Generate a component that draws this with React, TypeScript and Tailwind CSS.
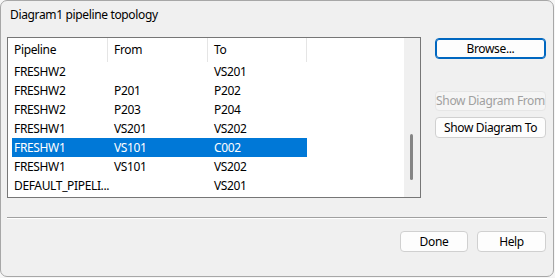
import React from 'react';

const ROWS = [
  { pipeline: 'FRESHW2', from: '', to: 'VS201' },
  { pipeline: 'FRESHW2', from: 'P201', to: 'P202' },
  { pipeline: 'FRESHW2', from: 'P203', to: 'P204' },
  { pipeline: 'FRESHW1', from: 'VS201', to: 'VS202' },
  { pipeline: 'FRESHW1', from: 'VS101', to: 'C002', selected: true },
  { pipeline: 'FRESHW1', from: 'VS101', to: 'VS202' },
  { pipeline: 'DEFAULT_PIPELI...', from: '', to: 'VS201' },
];

export default function App() {
  return (
    <div
      className="w-[555px] h-[278px] bg-[#f6f6f6] text-[12px] tracking-[-0.35px] text-black"
      style={{ fontFamily: '"Noto Sans", "Open Sans", sans-serif' }}
    >
      <div className="w-[554px] h-[277px] bg-[#f0f0f0] border border-[#a7a7a7] rounded-[7px] flex flex-col">
        {/* Title */}
        <div className="h-[36px] pl-[9px] pt-[6px] leading-[16px]">Diagram1 pipeline topology</div>

        <div className="flex h-[161px]">
          {/* List view */}
          <div className="ml-[6px] w-[414px] h-[161px] border border-[#767676] bg-white flex">
            <div className="w-[396px] flex flex-col">
              <div className="flex h-[24px] leading-[24px]">
                <div className="w-[100px] pl-[6px] border-r border-[#e5e5e5]">Pipeline</div>
                <div className="w-[100px] pl-[6px] border-r border-[#e5e5e5]">From</div>
                <div className="w-[99px] pl-[6px] border-r border-[#e5e5e5]">To</div>
              </div>
              {ROWS.map((r, i) => (
                <div
                  key={i}
                  className={`ml-[4px] w-[295px] h-[19px] leading-[19px] flex ${
                    r.selected ? 'bg-[#0078d7] text-white' : ''
                  }`}
                >
                  <div className="w-[96px] pl-[2px] whitespace-nowrap">{r.pipeline}</div>
                  <div className="w-[100px] pl-[6px]">{r.from}</div>
                  <div className="w-[99px] pl-[6px]">{r.to}</div>
                </div>
              ))}
            </div>
            {/* Scrollbar */}
            <div className="w-[16px] h-full bg-[#f0f0f0] flex flex-col">
              <div className="mt-[96px] ml-[6px] w-[3px] h-[46px] rounded-full bg-[#858585]" />
            </div>
          </div>

          {/* Side buttons */}
          <div className="ml-[14px] w-[111px] flex flex-col whitespace-nowrap">
            <button className="h-[21px] mt-px rounded-[4px] border border-[#0067c0] bg-[#fdfdfd] shadow-[inset_0_0_0_1px_#0067c0] leading-[19px]">
              Browse...
            </button>
            <button className="h-[20px] mt-[32px] rounded-[4px] border border-[#e6e6e6] bg-[#f5f5f5] text-[#a0a0a0] leading-[18px]">
              Show Diagram From
            </button>
            <button className="h-[21px] mt-[6px] rounded-[4px] border border-[#d0d0d0] bg-[#fdfdfd] leading-[19px]">
              Show Diagram To
            </button>
          </div>
        </div>

        {/* Separator */}
        <div className="mt-[19px] ml-[6px] w-[540px] h-[2px] border-t border-[#a0a0a0] border-b border-b-white" />

        {/* Bottom buttons */}
        <div className="mt-[12px] flex justify-end pr-[7px] gap-[9px]">
          <button className="w-[68px] h-[21px] rounded-[4px] border border-[#d0d0d0] bg-[#fdfdfd] leading-[19px]">
            Done
          </button>
          <button className="w-[69px] h-[21px] rounded-[4px] border border-[#d0d0d0] bg-[#fdfdfd] leading-[19px]">
            Help
          </button>
        </div>
      </div>
    </div>
  );
}
